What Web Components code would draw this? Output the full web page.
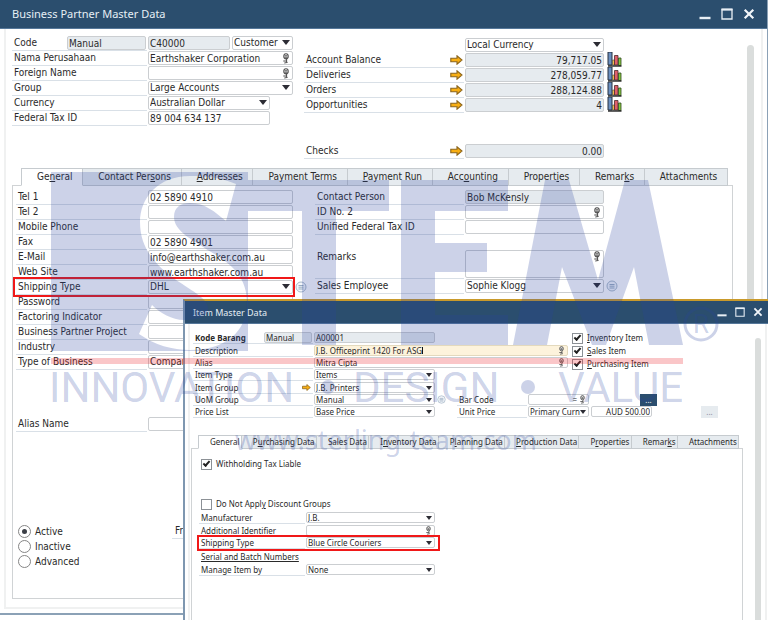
<!DOCTYPE html>
<html lang="en">
<head>
<meta charset="utf-8">
<title>Business Partner Master Data</title>
<style>
  html, body { height: 100%; }
  body { margin: 0; background: #fff; font: 10px/14px "DejaVu Sans Condensed", "Noto Sans", sans-serif; color: #2a2a2a; overflow: hidden; }
</style>
</head>
<body>
<app-desktop></app-desktop>
<script>
const lookup = `<svg class="ic" viewBox="0 0 8 11" width="8" height="11" aria-hidden="true"><ellipse cx="4" cy="3.300" rx="2.200" ry="2.600" fill="#fff" stroke="#4c4c4c" stroke-width="1.100"/><path d="M2.800 2.800h2.400M2.800 4.200h2.400M4.600 5.800v3.200M1.300 8h3.400M2.300 10l3.300-.6" fill="none" stroke="#4c4c4c" stroke-width="1"/></svg>`;
const arrow = `<svg class="arrow" viewBox="0 0 13 10" aria-hidden="true"><path d="M.8 3.200H7V.8L12 5 7 9.200V6.800H.8z" fill="#f8ae12" stroke="#8a641c" stroke-width="1.100"/></svg>`;
const chart = `<svg class="chart" viewBox="0 0 15 15" width="15" height="15" aria-hidden="true"><path d="M1 0h4v13H1z" fill="#6a8fc0" stroke="#27303f"/><path d="M5.500 8h2v5h-2z" fill="#f0c04a" stroke="#444" stroke-width=".6"/><path d="M7.500 3.500h3.500V13H7.500z" fill="#e0606a" stroke="#4a2a2c" stroke-width=".8"/><path d="M11.500 6H14v7.500h-2.500z" fill="#86c440" stroke="#2f4a1e" stroke-width=".8"/><path d="M1 14h13.500" stroke="#222" stroke-width="1.400"/></svg>`;
const info = `<svg class="info" viewBox="0 0 12 12" aria-hidden="true"><circle cx="6" cy="6" r="5" fill="#f3f6fa" stroke="#a9b9c9" stroke-width="1"/><path d="M3.500 4.500h5M3.500 6.200h5M3.500 8h5" stroke="#90a5bb" stroke-width=".9"/></svg>`;

const boxCss = `
  .box { box-sizing: border-box; display: flex; align-items: center; height: calc(var(--row) - 1px); border: 1px solid #cbced1; border-radius: 2px; background: #fff; position: relative; min-width: 0; }
  .box.readonly { background: #e6ebef; }
  .box.area { height: 28px; align-items: flex-start; }
  .box.focus { background: #fdf3dc; border-color: #e3d9bd; }
  .box input, .box select { appearance: none; border: 0; margin: 0; padding: 0 1px; background: none; font: inherit; line-height: calc(var(--row) - 3px); color: inherit; flex: 1; min-width: 0; width: 100%; height: 100%; outline: 0; border-radius: 0; }
  .box.right input { text-align: right; }
  .box.focus input { field-sizing: content; flex: none; width: auto; padding-right: 0; }
  .caret { width: 1px; height: 80%; background: #111; margin-right: auto; }
  .box.select::after { content: ""; position: absolute; right: 2px; top: 3px; border: solid transparent; border-width: 5px 4px 0; border-top-color: #2c2c34; pointer-events: none; }
  :host([compact]) .box.select::after { border-width: 4px 3px 0; right: 2px; }
  .ic { flex: none; width: var(--ic, 8px); height: var(--row-ic, 11px); margin-right: 2px; }
  .eq { margin-right: 2px; }`;

function boxHtml(el) {
  const kind = el.getAttribute('kind') || 'input', value = el.getAttribute('value') || '';
  const name = el.getAttribute('name') ? ` aria-label="${el.getAttribute('name')}"` : '';
  const cls = ['box', kind, el.hasAttribute('amount') ? 'right' : '', el.hasAttribute('focused') ? 'focus' : ''].join(' ');
  const control = kind === 'select'
    ? `<select id="f"${name}><option>${value}</option></select>`
    : `<input id="f" type="text" value="${value}"${name}${kind === 'readonly' ? ' readonly' : ''}>`;
  return `<div class="${cls}">${control}${el.hasAttribute('focused') ? '<span class="caret"></span>' : ''}${el.hasAttribute('eq') ? '<span class="eq">=</span>' : ''}${el.hasAttribute('lookup') ? lookup : ''}</div>`;
}

customElements.define('field-box', class extends HTMLElement {
  connectedCallback() {
    this.attachShadow({ mode: 'open' }).innerHTML = `<style>:host { display: block; } ${boxCss}</style>${boxHtml(this)}`;
  }
});

customElements.define('form-row', class extends HTMLElement {
  connectedCallback() {
    const has = n => this.hasAttribute(n);
    this.attachShadow({ mode: 'open' }).innerHTML = `<style>
      :host { display: flex; min-height: var(--row); position: relative; align-items: stretch; }
      .lab { box-sizing: border-box; flex: none; width: var(--label-w); display: flex; align-items: var(--lab-align, flex-end); border-bottom: 1px solid #d9e0e7; padding-left: 2px; white-space: nowrap; margin-right: 1px; }
      label { flex: 1; line-height: calc(var(--row) - 1px); }
      :host([strong]) label { font-weight: bold; }
      :host([bare]) .lab { border-color: transparent; }
      .box { flex: 0 0 var(--field-w); }
      .arrow { flex: none; width: var(--arrow, 13px); height: calc(var(--row) - 5px); margin: 0 1px 2px 0; }
      .info { flex: none; width: calc(var(--row) - 3px); height: calc(var(--row) - 3px); margin: 1px 0 0 2px; }
      .chart { flex: none; margin: -1px 0 0 3px; }
      ::slotted([slot=post]) { margin-left: 2px; }
      :host([highlight])::after { content: ""; box-sizing: border-box; position: absolute; inset: var(--mark-in); width: var(--mark-w); border: 2px solid #f01818; pointer-events: none; z-index: 1; }
      ${boxCss}
    </style>
    <div class="lab"><label for="f">${this.getAttribute('label') || ''}</label><slot name="pre"></slot>${has('arrow') ? arrow : ''}</div>
    ${boxHtml(this)}<slot name="post"></slot>${has('info') ? info : ''}${has('chart') ? chart : ''}`;
  }
});

customElements.define('check-item', class extends HTMLElement {
  connectedCallback() {
    const type = this.getAttribute('type') || 'checkbox';
    this.attachShadow({ mode: 'open' }).innerHTML = `<style>
      :host { display: block; height: var(--row); }
      label { display: flex; align-items: center; gap: 4px; height: 100%; white-space: nowrap; }
      input { appearance: none; box-sizing: border-box; margin: 0; width: 11px; height: 11px; border: 1px solid #8c9196; background: #fff; display: grid; place-items: center; }
      input[type=checkbox]:checked::after { content: ""; width: 5px; height: 2px; border: solid #222; border-width: 0 0 2px 2px; transform: rotate(-48deg); margin-top: -2px; }
      input[type=radio] { width: 13px; height: 13px; border-radius: 50%; border-color: #858585; }
      input[type=radio]:checked::after { content: ""; width: 5px; height: 5px; border-radius: 50%; background: #3b3f46; }
    </style><label><input type="${type}" name="state"${this.hasAttribute('on') ? ' checked' : ''}><span><slot></slot></span></label>`;
  }
});

customElements.define('tab-strip', class extends HTMLElement {
  connectedCallback() {
    const tabs = this.getAttribute('tabs').split('|').map((t, i) =>
      `<button role="tab" aria-selected="${i === 0}"><span>${t.replace(/_(.)/, '<u>$1</u>')}</span></button>`).join('');
    this.attachShadow({ mode: 'open' }).innerHTML = `<style>
      :host { display: flex; flex-direction: column; flex: 1; min-height: 0; }
      .tabs { display: flex; margin: 0 var(--tab-mr) -1px var(--tab-ml); z-index: 1; }
      button { flex: 1 1 auto; font: inherit; color: inherit; text-align: left; height: var(--tab-h); line-height: calc(var(--tab-h) - 2px); margin: 0; padding: var(--tab-p); background: #e6ebef; border: 1px solid #c6cbcf; border-left-width: 0; white-space: nowrap; }
      button:first-child { border-left-width: 1px; }
      button[aria-selected=true] { background: #fff; border-bottom-color: #fff; }
      u { text-underline-offset: 1px; }
      .panel { flex: 1; border: 1px solid #d0d3d5; background: #fff; border-bottom-width: var(--panel-b, 1px); min-height: 0; }
    </style><div class="tabs" role="tablist">${tabs}</div><div class="panel" role="tabpanel"><slot></slot></div>`;
  }
});

customElements.define('app-window', class extends HTMLElement {
  connectedCallback() {
    this.attachShadow({ mode: 'open' }).innerHTML = `<style>
      :host { display: flex; flex-direction: column; box-sizing: border-box; background: #fff; }
      header { box-sizing: border-box; flex: none; display: flex; align-items: center; height: var(--bar-h); background: #2b4e6e; color: #e6eef5; padding: 0 var(--bar-r) 0 var(--bar-l); border-bottom: 1px solid #56789a; }
      h1 { flex: 1; margin: 0; font: 400 var(--title) "Noto Sans", sans-serif; }
      button { border: 0; padding: 0; margin: 0 0 0 var(--btn-gap); background: none; display: block; width: var(--btn); height: var(--btn); }
      svg { display: block; width: 100%; height: 100%; }
      .frame { flex: 1; min-height: 0; display: flex; border: solid #f0f1f1; border-width: 0 2px var(--frame-b) 2px; margin: var(--frame-m); }
      .main { flex: 1; min-width: 0; display: flex; flex-direction: column; padding: var(--main-p); }
      .scroll { flex: none; width: var(--sb-w); margin: var(--sb-m); background: #dadddc; border-radius: 4px 4px 0 0; }
    </style>
    <header><h1>${this.getAttribute('heading')}</h1>
      <button aria-label="Minimize"><svg viewBox="0 0 12 12"><path d="M.5 10h11" stroke="#e8eff5" stroke-width="2.400"/></svg></button>
      <button aria-label="Maximize"><svg viewBox="0 0 12 12"><path d="M1 1.500h10v9.500H1z" fill="none" stroke="#e8eff5" stroke-width="1.300"/><path d="M.5 1.500h11" stroke="#e8eff5" stroke-width="2"/></svg></button>
      <button aria-label="Close"><svg viewBox="0 0 12 12"><path d="M1.700 1.700l8.600 8.600M10.300 1.700l-8.600 8.600" stroke="#f2f6fa" stroke-width="2.200"/></svg></button>
    </header>
    <div class="frame"><div class="main"><slot></slot></div><div class="scroll"></div></div>`;
  }
});

customElements.define('partner-form', class extends HTMLElement {
  connectedCallback() {
    this.attachShadow({ mode: 'open' }).innerHTML = `<style>
      :host { display: flex; flex-direction: column; flex: 1; min-height: 0; --row: 15px; --label-w: 135px; --field-w: 145px; --tab-h: 18px; --tab-p: 0 8px 0 15px; --tab-ml: 9px; --tab-mr: 5px; --mark-w: 282px; --mark-in: -3px auto -2px -3px; }
      .top { display: grid; grid-template-columns: 282px 1fr; column-gap: 10px; height: 132px; flex: none; }
      .top .code { --field-w: 82px; }
      .code field-box[slot=pre] { width: 79px; margin: 0 1px 0 0; }
      .code field-box[slot=post] { width: 61px; }
      .top .short { --field-w: 122px; }
      .sums { padding-top: 2px; --label-w: 160px; --field-w: 139px; }
      .gap { height: 31px; }
      .cols { display: grid; grid-template-columns: 297px 1fr; padding: 4px 3px 0; }
      .contact, .alias { --label-w: 131px; }
      .person { --label-w: 149px; --field-w: 139px; padding-left: 2px; }
      .person .blank { height: 15px; }
      .person .tall { min-height: 29px; --lab-align: flex-start; }
      .alias { margin: 47px 3px 0; }
      .state { display: grid; grid-template-columns: 154px 1fr; padding: 92px 5px 0; }
      .from { border-bottom: 1px solid #d9e0e7; height: 14px; line-height: 14px; padding-left: 3px; width: 90px; }
    </style>
    <div class="top">
      <div>
        <form-row class="code" label="Code" kind="readonly" value="C40000">
          <field-box slot="pre" kind="readonly" value="Manual" name="Numbering"></field-box>
          <field-box slot="post" kind="select" value="Customer" name="Partner type"></field-box>
        </form-row>
        <form-row label="Nama Perusahaan" value="Earthshaker Corporation" lookup></form-row>
        <form-row label="Foreign Name" lookup></form-row>
        <form-row label="Group" kind="select" value="Large Accounts"></form-row>
        <form-row class="short" label="Currency" kind="select" value="Australian Dollar"></form-row>
        <form-row class="short" label="Federal Tax ID" value="89 004 634 137"></form-row>
      </div>
      <div class="sums">
        <form-row bare kind="select" value="Local Currency" name="Currency view"></form-row>
        <form-row label="Account Balance" kind="readonly" amount value="79,717.05" arrow chart></form-row>
        <form-row label="Deliveries" kind="readonly" amount value="278,059.77" arrow chart></form-row>
        <form-row label="Orders" kind="readonly" amount value="288,124.88" arrow chart></form-row>
        <form-row label="Opportunities" kind="readonly" amount value="4" arrow chart></form-row>
        <div class="gap"></div>
        <form-row label="Checks" kind="readonly" amount value="0.00" arrow></form-row>
      </div>
    </div>
    <tab-strip tabs="Ge_neral|Contact Per_sons|_Addresses|Payment Terms|_Payment Run|Acc_ounting|Propert_ies|Remar_ks|Attachments">
      <div class="cols">
        <div class="contact">
          <form-row label="Tel 1" value="02 5890 4910"></form-row>
          <form-row label="Tel 2"></form-row>
          <form-row label="Mobile Phone"></form-row>
          <form-row label="Fax" value="02 5890 4901"></form-row>
          <form-row label="E-Mail" value="info@earthshaker.com.au"></form-row>
          <form-row label="Web Site" value="www.earthshaker.com.au"></form-row>
          <form-row label="Shipping Type" kind="select" value="DHL" info highlight></form-row>
          <form-row label="Password"></form-row>
          <form-row label="Factoring Indicator"></form-row>
          <form-row label="Business Partner Project"></form-row>
          <form-row label="Industry"></form-row>
          <form-row label="Type of Business" kind="select" value="Company"></form-row>
        </div>
        <div class="person">
          <form-row label="Contact Person" kind="readonly" value="Bob McKensly"></form-row>
          <form-row label="ID No. 2" lookup></form-row>
          <form-row label="Unified Federal Tax ID"></form-row>
          <div class="blank"></div>
          <form-row class="tall" label="Remarks" kind="area" lookup></form-row>
          <form-row label="Sales Employee" kind="select" value="Sophie Klogg" info></form-row>
        </div>
      </div>
      <form-row class="alias" label="Alias Name"></form-row>
      <div class="state">
        <div>
          <check-item type="radio" on>Active</check-item>
          <check-item type="radio">Inactive</check-item>
          <check-item type="radio">Advanced</check-item>
        </div>
        <div class="from">From</div>
      </div>
    </tab-strip>`;
  }
});

customElements.define('item-form', class extends HTMLElement {
  connectedCallback() {
    this.attachShadow({ mode: 'open' }).innerHTML = `<style>
      :host { display: flex; flex-direction: column; flex: 1; min-height: 0; font: 8px/12px "Noto Sans", sans-serif; --row: 12px; --label-w: 120px; --field-w: 121px; --ic: 7px; --row-ic: 9px; --arrow: 11px; --tab-h: 14px; --tab-p: 0 1px 0 11px; --tab-ml: 7px; --tab-mr: 4px; --panel-b: 0; }
      .top { display: grid; grid-template-columns: 264px 110px 1fr; height: 103px; flex: none; padding-left: 2px; }
      .rows { grid-area: 1 / 1 / 2 / 3; }
      .first, .type { margin-bottom: 1px; }
      .first field-box { width: 48px; margin-right: 1px; }
      .wide { --field-w: 254px; }
      .checks { grid-area: 1 / 3; padding-left: 5px; }
      .checks check-item { margin-bottom: 1px; }
      .prices { grid-area: 1 / 2 / 2 / 4; padding-top: 62px; justify-self: start; --label-w: 70px; --field-w: 61px; position: relative; }
      .line { display: flex; }
      .line field-box { width: 61px; margin-left: 2px; }
      .line button { border: 0; padding: 0; width: 17px; height: 12px; font: inherit; line-height: 10px; background: #2b4e6e; color: #fff; margin-left: 51px; }
      .line button.off { background: #e6ebef; color: #889; margin-left: 49px; }
      .body { padding: 9px 5px 0; --label-w: 106px; --field-w: 129px; --mark-w: 243px; --mark-in: -2px auto -2px -2px; }
      .tax { margin: 0 0 28px 4px; }
      .disc { margin: 0 0 2px 4px; }
      a { display: block; color: inherit; margin: 2px 0 0 4px; }
      .body form-row { margin-left: 2px; }
      .maker { margin-bottom: 1px; }
      .manage { margin-top: 1px; }
    </style>
    <div class="top">
      <div class="rows">
        <form-row compact strong class="first" label="Kode Barang" kind="readonly" value="A00001"><field-box slot="pre" kind="readonly" value="Manual" name="Numbering"></field-box></form-row>
        <form-row compact class="wide" label="Description" value="J.B. Officeprint 1420 For ASG" focused lookup></form-row>
        <form-row compact class="wide" label="Alias" value="Mitra Cipta" lookup></form-row>
        <form-row compact class="type" label="Item Type" kind="select" value="Items"></form-row>
        <form-row compact label="Item Group" kind="select" value="J.B. Printers" arrow></form-row>
        <form-row compact label="UoM Group" kind="select" value="Manual" info></form-row>
        <form-row compact label="Price List" kind="select" value="Base Price"></form-row>
      </div>
      <div class="checks">
        <check-item on><u>I</u>nventory Item</check-item>
        <check-item on><u>S</u>ales Item</check-item>
        <check-item on><u>P</u>urchasing Item</check-item>
      </div>
      <div class="prices">
        <div class="line"><form-row compact label="Bar Code" eq lookup></form-row><button aria-label="Bar codes">...</button></div>
        <div class="line"><form-row compact label="Unit Price" kind="select" value="Primary Curn"></form-row><field-box compact amount value="AUD 500.00" name="Price"></field-box><button class="off" aria-label="Price details">...</button></div>
      </div>
    </div>
    <tab-strip tabs="General|P_urchasing Data|Sales Data|I_nventory Data|P_lanning Data|_Production Data|P_roperties|Remar_ks|Attachments">
      <div class="body">
        <check-item class="tax" on>Withholding Tax Liable</check-item>
        <check-item class="disc">Do Not Appl<u>y</u> Discount Groups</check-item>
        <form-row compact class="maker" label="Manufacturer" kind="select" value="J.B."></form-row>
        <form-row compact label="Additional Identifier" lookup></form-row>
        <form-row compact label="Shipping Type" kind="select" value="Blue Circle Couriers" highlight></form-row>
        <a href="#serial">Serial and Batch Numbers</a>
        <form-row compact class="manage" label="Manage Item by" kind="select" value="None"></form-row>
      </div>
    </tab-strip>`;
  }
});

customElements.define('brand-mark', class extends HTMLElement {
  connectedCallback() {
    this.attachShadow({ mode: 'open' }).innerHTML = `<style>
      :host { display: block; pointer-events: none; }
      svg { display: block; width: 100%; height: auto; }
    </style>
    <svg viewBox="0 0 768 622" fill="rgb(42,68,159)" fill-opacity=".24" role="img" aria-label="STEM">
      <path fill-rule="evenodd" d="M51 172H248V180H389V211H336V345H302V211H248V351H51Z
        M236 184C222 178 208 176 190 176C158 176 140 198 140 222C140 248 155 264 172 277C190 290 208 298 208 308C208 317 197 320 184 320C172 320 160 313 152 305L139 334C155 345 172 350 190 350C225 350 247 332 247 303C247 279 234 266 216 255C192 240 174 231 174 217C174 207 181 203 190 203C205 203 215 212 226 221Z"/>
      <path d="M401 180H508V211H435V243H487V272H435V315H508V345H401Z"/>
      <path d="M513 345L545 180H569L598 280L625 180H648L683 345H649L634 267L606 345H592L562 267L547 345Z"/>
      <circle cx="701" cy="324" r="16" fill="none" stroke="rgb(42,68,159)" stroke-opacity=".24" stroke-width="3"/>
      <rect x="51" y="358" width="632" height="6" fill="#ed1c24" fill-opacity=".25"/>
      <g font-family="Roboto, sans-serif">
        <text x="693" y="333" font-size="26">R</text>
        <text x="49" y="402" font-size="42">INNOVATION</text>
        <text x="353" y="402" font-size="42">DESIGN</text>
        <text x="558" y="402" font-size="42">VALUE</text>
      </g>
      <circle cx="328" cy="387" r="7"/><circle cx="528" cy="387" r="7"/>
      <text x="235" y="450" font-family="Noto Sans, sans-serif" font-size="27">www.sterling-team.com</text>
    </svg>`;
  }
});

customElements.define('app-desktop', class extends HTMLElement {
  connectedCallback() {
    this.attachShadow({ mode: 'open' }).innerHTML = `<style>
      :host { display: flex; box-sizing: border-box; height: 100vh; padding-bottom: 7px; position: relative; overflow: hidden; }
      .partner { flex: 1; min-width: 0; border: solid #8ba1b6; border-width: 0 1px 2px 0; --bar-h: 29px; --bar-l: 12px; --bar-r: 12px; --title: 11px/16px; --btn: 12px; --btn-gap: 10px; --frame-m: 0 4px 4px 4px; --frame-b: 2px; --main-p: 7px 0 8px 6px; --sb-w: 7px; --sb-m: 16px 7px 0 14px; }
      .item { position: absolute; left: 183px; top: 299px; right: 0; bottom: 2px; border: solid #7e97b0; border-width: 2px 0 0 2px; border-top-color: #c99a2b; --bar-h: 23px; --bar-l: 8px; --bar-r: 5px; --title: 9px/13px; --btn: 10px; --btn-gap: 8px; --frame-m: 0 1px 0 3px; --frame-b: 0; --main-p: 8px 0 0 1px; --sb-w: 6px; --sb-m: 14px 4px 0 12px; }
      brand-mark { position: absolute; left: 0; top: 0; width: 100%; z-index: 3; }
    </style>
    <app-window class="partner" heading="Business Partner Master Data"><partner-form></partner-form></app-window>
    <app-window class="item" heading="Item Master Data"><item-form></item-form></app-window>
    <brand-mark></brand-mark>`;
  }
});
</script>
</body>
</html>
